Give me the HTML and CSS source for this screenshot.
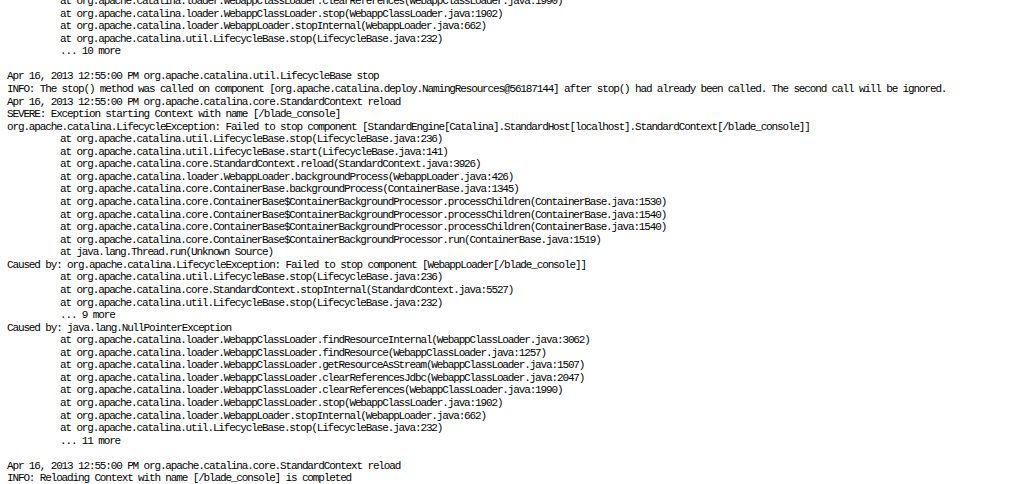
FILE: index.html
```html
<!DOCTYPE html>
<html lang="en">
<head>
  <meta charset="UTF-8" />
  <title>catalina.out</title>
  <link rel="stylesheet" href="styles.css">
</head>
<body>
<pre class="log">	at org.apache.catalina.loader.WebappClassLoader.clearReferences(WebappClassLoader.java:1990)
	at org.apache.catalina.loader.WebappClassLoader.stop(WebappClassLoader.java:1902)
	at org.apache.catalina.loader.WebappLoader.stopInternal(WebappLoader.java:662)
	at org.apache.catalina.util.LifecycleBase.stop(LifecycleBase.java:232)
	... 10 more

Apr 16, 2013 12:55:00 PM org.apache.catalina.util.LifecycleBase stop
INFO: The stop() method was called on component [org.apache.catalina.deploy.NamingResources@56187144] after stop() had already been called. The second call will be ignored.
Apr 16, 2013 12:55:00 PM org.apache.catalina.core.StandardContext reload
SEVERE: Exception starting Context with name [/blade_console]
org.apache.catalina.LifecycleException: Failed to stop component [StandardEngine[Catalina].StandardHost[localhost].StandardContext[/blade_console]]
	at org.apache.catalina.util.LifecycleBase.stop(LifecycleBase.java:236)
	at org.apache.catalina.util.LifecycleBase.start(LifecycleBase.java:141)
	at org.apache.catalina.core.StandardContext.reload(StandardContext.java:3926)
	at org.apache.catalina.loader.WebappLoader.backgroundProcess(WebappLoader.java:426)
	at org.apache.catalina.core.ContainerBase.backgroundProcess(ContainerBase.java:1345)
	at org.apache.catalina.core.ContainerBase$ContainerBackgroundProcessor.processChildren(ContainerBase.java:1530)
	at org.apache.catalina.core.ContainerBase$ContainerBackgroundProcessor.processChildren(ContainerBase.java:1540)
	at org.apache.catalina.core.ContainerBase$ContainerBackgroundProcessor.processChildren(ContainerBase.java:1540)
	at org.apache.catalina.core.ContainerBase$ContainerBackgroundProcessor.run(ContainerBase.java:1519)
	at java.lang.Thread.run(Unknown Source)
Caused by: org.apache.catalina.LifecycleException: Failed to stop component [WebappLoader[/blade_console]]
	at org.apache.catalina.util.LifecycleBase.stop(LifecycleBase.java:236)
	at org.apache.catalina.core.StandardContext.stopInternal(StandardContext.java:5527)
	at org.apache.catalina.util.LifecycleBase.stop(LifecycleBase.java:232)
	... 9 more
Caused by: java.lang.NullPointerException
	at org.apache.catalina.loader.WebappClassLoader.findResourceInternal(WebappClassLoader.java:3062)
	at org.apache.catalina.loader.WebappClassLoader.findResource(WebappClassLoader.java:1257)
	at org.apache.catalina.loader.WebappClassLoader.getResourceAsStream(WebappClassLoader.java:1507)
	at org.apache.catalina.loader.WebappClassLoader.clearReferencesJdbc(WebappClassLoader.java:2047)
	at org.apache.catalina.loader.WebappClassLoader.clearReferences(WebappClassLoader.java:1990)
	at org.apache.catalina.loader.WebappClassLoader.stop(WebappClassLoader.java:1902)
	at org.apache.catalina.loader.WebappLoader.stopInternal(WebappLoader.java:662)
	at org.apache.catalina.util.LifecycleBase.stop(LifecycleBase.java:232)
	... 11 more

Apr 16, 2013 12:55:00 PM org.apache.catalina.core.StandardContext reload
INFO: Reloading Context with name [/blade_console] is completed
</pre>
</body>
</html>
```

FILE: styles.css
```css
html {
  overflow: hidden;
}

body {
  margin: 0;
  padding: 0 0 0 7px;
  background-color: #ffffff;
}

.log {
  margin: -5px 0 0;
  font-family: "Liberation Mono", monospace;
  font-size: 11px;
  letter-spacing: -1.14px;
  line-height: 12.56px;
  color: #000000;
  tab-size: 53px;
  white-space: pre;
}
```
